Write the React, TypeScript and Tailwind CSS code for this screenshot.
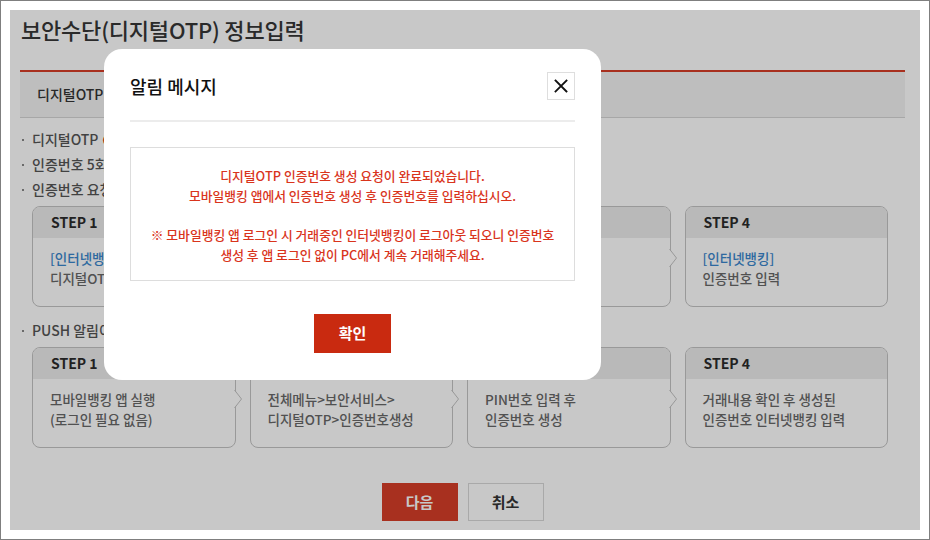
import * as React from "react";

interface Step {
  label: string;
  lines: { text: string; blue?: boolean }[];
}

const otpSteps: Step[] = [
  { label: "STEP 1", lines: [{ text: "[인터넷뱅킹]", blue: true }, { text: "디지털OTP 인증번호 요청" }] },
  { label: "STEP 2", lines: [{ text: "[모바일뱅킹]", blue: true }, { text: "앱 실행 후 PUSH 알림 확인" }] },
  { label: "STEP 3", lines: [{ text: "[모바일뱅킹]", blue: true }, { text: "인증번호 생성" }] },
  { label: "STEP 4", lines: [{ text: "[인터넷뱅킹]", blue: true }, { text: "인증번호 입력" }] },
];

const pushSteps: Step[] = [
  { label: "STEP 1", lines: [{ text: "모바일뱅킹 앱 실행" }, { text: "(로그인 필요 없음)" }] },
  { label: "STEP 2", lines: [{ text: "전체메뉴>보안서비스>" }, { text: "디지털OTP>인증번호생성" }] },
  { label: "STEP 3", lines: [{ text: "PIN번호 입력 후" }, { text: "인증번호 생성" }] },
  { label: "STEP 4", lines: [{ text: "거래내용 확인 후 생성된" }, { text: "인증번호 인터넷뱅킹 입력" }] },
];

function StepCard({ step, last }: { step: Step; last: boolean }) {
  return (
    <div className="relative h-[101px] rounded-[8px] border border-[#c3c3c3] bg-white">
      <div className="h-[31px] rounded-t-[7px] bg-[#ececec] pl-[18px] text-[14px] font-semibold leading-[31px] text-[#2b2b2b]">
        {step.label}
      </div>
      <div className="pl-[17px] pt-[10px] text-[13.5px] font-medium leading-[20px] text-[#686868]">
        {step.lines.map((l, i) => (
          <div key={i} className={l.blue ? "text-[#3a86cc]" : ""}>
            {l.text}
          </div>
        ))}
      </div>
      {/* Arrow notch pointing to next step */}
      {!last && (
        <svg className="absolute left-full top-[42px] -ml-[1px]" width="9" height="18" viewBox="0 0 9 18">
          <polygon points="0,0 7.5,9 0,18" fill="#ffffff" />
          <polyline points="0.5,0 7.5,9 0.5,18" fill="none" stroke="#c3c3c3" strokeWidth="1" />
        </svg>
      )}
    </div>
  );
}

function StepRow({ steps }: { steps: Step[] }) {
  return (
    <div className="ml-[12px] grid w-[856px] grid-cols-4 gap-[14px]">
      {steps.map((s, i) => (
        <StepCard key={s.label} step={s} last={i === steps.length - 1} />
      ))}
    </div>
  );
}

function Bullet({ children }: { children: React.ReactNode }) {
  return (
    <div className="flex items-center text-[14px] font-medium leading-[25px] text-[#555]">
      <span className="ml-[2px] mr-[8px] inline-block h-[2px] w-[2px] bg-[#888]" />
      {children}
    </div>
  );
}

function AlertModal() {
  return (
    <div className="absolute left-[94px] top-[39px] flex h-[331px] w-[497px] flex-col rounded-[18px] bg-white px-[26px]">
      <div className="mt-[23px] flex h-[28px] items-center justify-between">
        <h2 className="text-[18px] font-medium text-[#111]">알림 메시지</h2>
        <button className="flex h-[28px] w-[28px] items-center justify-center border border-[#dedede] bg-white">
          <svg width="14" height="14" viewBox="0 0 14 14">
            <path d="M1.5 1.5 L12.5 12.5 M12.5 1.5 L1.5 12.5" stroke="#111" strokeWidth="1.8" strokeLinecap="square" />
          </svg>
        </button>
      </div>
      <div className="mt-[20px] h-[2px] bg-[#ececec]" />
      <div className="mt-[25px] h-[134px] border border-[#dddddd] pt-[18px] text-center text-[12.8px] font-medium leading-[19.75px] text-[#d9341c]">
        <p>디지털OTP 인증번호 생성 요청이 완료되었습니다.</p>
        <p>모바일뱅킹 앱에서 인증번호 생성 후 인증번호를 입력하십시오.</p>
        <p>&nbsp;</p>
        <p>※ 모바일뱅킹 앱 로그인 시 거래중인 인터넷뱅킹이 로그아웃 되오니 인증번호</p>
        <p>생성 후 앱 로그인 없이 PC에서 계속 거래해주세요.</p>
      </div>
      <div className="mt-[33px] flex justify-center">
        <button className="h-[39px] w-[77px] bg-[#c92a10] text-[15px] font-bold text-white">확인</button>
      </div>
    </div>
  );
}

export default function App() {
  return (
    <div className="h-[540px] w-[930px] border border-[#7f7f7f] bg-white p-[9px] font-['Noto_Sans_CJK_KR','Noto_Sans',sans-serif]">
      <div className="relative h-full w-full overflow-hidden bg-white">
        <div className="ml-[10px] mr-[15px]">
          <h1 className="pl-[1px] pt-[3px] text-[22px] font-medium leading-[32px] tracking-[-0.2px] text-[#363636]">
            보안수단(디지털OTP) 정보입력
          </h1>
          <div className="mt-[25px] h-[2px] bg-[#d63e28]" />
          <div className="h-[46px] border-b border-[#d5d5d5] bg-[#f3f3f3] pl-[17px] text-[14px] font-medium leading-[45px] text-[#333]">
            디지털OTP 인증번호 입력
          </div>

          <div className="mt-[9px]">
            <Bullet>
              디지털OTP<span className="ml-[4px] text-[#d9341c]">● 인증번호는 생성 후 3분 이내에 입력하셔야 합니다.</span>
            </Bullet>
            <Bullet>인증번호 5회 연속 오류 시 디지털OTP 이용이 제한됩니다.</Bullet>
            <Bullet>인증번호 요청 후 아래 순서에 따라 진행해주세요.</Bullet>
          </div>

          <div className="mt-[4px]">
            <StepRow steps={otpSteps} />
          </div>

          <div className="mt-[11px]">
            <Bullet>PUSH 알림이 오지 않는 경우 아래 순서에 따라 진행해주세요.</Bullet>
          </div>

          <div className="mt-[4px]">
            <StepRow steps={pushSteps} />
          </div>

          <div className="mt-[35px] flex justify-center gap-[10px]">
            <button className="h-[38px] w-[76px] bg-[#d63e28] text-[15px] font-bold text-white">다음</button>
            <button className="h-[38px] w-[76px] border border-[#d8d8d8] bg-white text-[15px] font-bold text-[#333]">
              취소
            </button>
          </div>
        </div>

        {/* Dim overlay */}
        <div className="absolute inset-0 bg-black/[0.216]" />
        <AlertModal />
      </div>
    </div>
  );
}
